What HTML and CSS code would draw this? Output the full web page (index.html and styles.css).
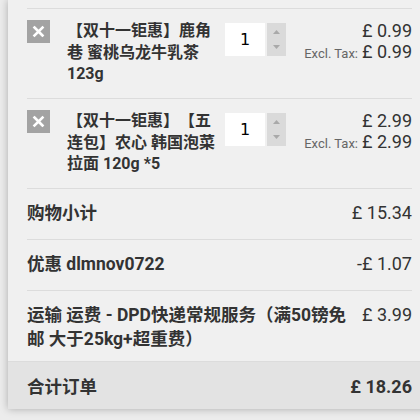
FILE: index.html
```html
<!DOCTYPE html>
<html lang="zh">
<head>
<meta charset="utf-8">
<link rel="stylesheet" href="styles.css">
</head>
<body>
<div class="panel">
  <div class="content">
    <div class="item">
      <span class="remove"><svg width="23" height="23" viewBox="0 0 23 23"><path d="M7.5 7.5 L15.5 15.5 M15.5 7.5 L7.5 15.5" stroke="#fff" stroke-width="2.6" stroke-linecap="square"/></svg></span>
      <div class="title">【双十一钜惠】鹿角巷 蜜桃乌龙牛乳茶 123g</div>
      <div class="qty">
        <div class="qty-input">1</div>
        <div class="spin"><svg width="19" height="33" viewBox="0 0 19 33"><path d="M6 11 L13 11 L9.5 7 Z" fill="#a9a9a9"/><path d="M6 22 L13 22 L9.5 26 Z" fill="#a9a9a9"/></svg></div>
      </div>
      <div class="prices">
        <div class="price">£ 0.99</div>
        <div class="excl"><span class="excl-label">Excl. Tax:</span> <span class="price">£ 0.99</span></div>
      </div>
    </div>
    <div class="item">
      <span class="remove"><svg width="23" height="23" viewBox="0 0 23 23"><path d="M7.5 7.5 L15.5 15.5 M15.5 7.5 L7.5 15.5" stroke="#fff" stroke-width="2.6" stroke-linecap="square"/></svg></span>
      <div class="title">【双十一钜惠】【五连包】农心 韩国泡菜拉面 120g *5</div>
      <div class="qty">
        <div class="qty-input">1</div>
        <div class="spin"><svg width="19" height="33" viewBox="0 0 19 33"><path d="M6 11 L13 11 L9.5 7 Z" fill="#a9a9a9"/><path d="M6 22 L13 22 L9.5 26 Z" fill="#a9a9a9"/></svg></div>
      </div>
      <div class="prices">
        <div class="price">£ 2.99</div>
        <div class="excl"><span class="excl-label">Excl. Tax:</span> <span class="price">£ 2.99</span></div>
      </div>
    </div>
    <div class="row">
      <div class="label">购物小计</div>
      <div class="amount">£ 15.34</div>
    </div>
    <div class="row">
      <div class="label">优惠 dlmnov0722</div>
      <div class="amount">-£ 1.07</div>
    </div>
    <div class="row row-ship">
      <div class="label">运输 运费 - DPD快递常规服务（满50镑免邮 大于25kg+超重费）</div>
      <div class="amount">£ 3.99</div>
    </div>
  </div>
  <div class="total">
    <div class="total-inner">
      <div class="label">合计订单</div>
      <div class="amount strong">£ 18.26</div>
    </div>
  </div>
</div>
</body>
</html>
```
FILE: styles.css
```css
html, body {
  margin: 0;
  padding: 0;
}
body {
  background: #ececec;
  font-family: Roboto, "Noto Sans CJK SC", sans-serif;
  color: #333;
  overflow: hidden;
  height: 420px;
  text-spacing-trim: space-all;
}
.panel {
  margin-left: 8px;
  margin-right: -20px;
  background: #f0f0f0;
  box-shadow: 0 0 8px rgba(0, 0, 0, 0.28);
}
.content {
  padding: 8px 28px 0 19px;
}
.item {
  display: flex;
  align-items: flex-start;
  border-top: 1px solid #dcdcdc;
  padding: 11px 0 12px;
  height: 66px;
}
.remove {
  width: 23px;
  height: 23px;
  background: #a3a3a3;
  flex: none;
  display: block;
}
.remove svg {
  display: block;
}
.title {
  margin-left: 17px;
  width: 152px;
  flex: none;
  font-size: 16px;
  font-weight: 700;
  line-height: 21.5px;
  color: #333;
}
.qty {
  margin-left: 6px;
  margin-top: 3px;
  display: flex;
  gap: 2px;
  flex: none;
}
.qty-input {
  width: 40px;
  height: 33px;
  background: #fff;
  font-family: "DejaVu Sans", sans-serif;
  font-size: 16px;
  line-height: 33px;
  text-align: center;
  color: #000;
}
.spin {
  width: 19px;
  height: 33px;
  background: #dadada;
}
.spin svg {
  display: block;
}
.prices {
  margin-left: auto;
  text-align: right;
  line-height: 21px;
}
.price {
  font-size: 18px;
  color: #333;
}
.excl-label {
  font-size: 13px;
  color: #666;
}
.row {
  display: flex;
  align-items: flex-start;
  justify-content: space-between;
  border-top: 1px solid #dcdcdc;
  padding: 12px 0 14px;
  line-height: 24px;
}
.row-ship {
  padding-bottom: 10px;
}
.label {
  font-size: 17.5px;
  font-weight: 700;
  color: #333;
  max-width: 324px;
}
.amount {
  font-size: 18px;
  color: #333;
  white-space: nowrap;
}
.strong {
  font-weight: 700;
}
.total {
  background: #e3e3e3;
  border-top: 1px solid #dcdcdc;
  padding: 0 28px 0 19px;
}
.total-inner {
  display: flex;
  justify-content: space-between;
  padding: 13px 0 10px;
  line-height: 24px;
}
```
